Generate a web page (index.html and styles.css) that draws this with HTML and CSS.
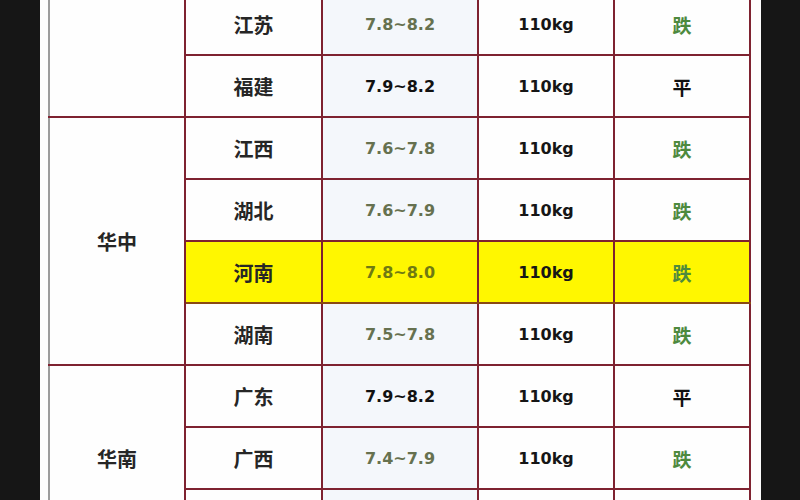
FILE: index.html
```html
<!DOCTYPE html>
<html lang="zh-CN">
<head>
<meta charset="utf-8">
<title>生猪价格</title>
<link rel="stylesheet" href="styles.css">
</head>
<body>
<div class="page">
  <table class="prices">
    <colgroup>
      <col class="c-region"><col class="c-prov"><col class="c-price"><col class="c-weight"><col class="c-trend">
    </colgroup>
    <tbody>
      <tr>
        <td class="region" rowspan="2"></td>
        <td class="prov">江苏</td>
        <td class="price down">7.8~8.2</td>
        <td class="weight">110kg</td>
        <td class="trend down">跌</td>
      </tr>
      <tr>
        <td class="prov">福建</td>
        <td class="price flat">7.9~8.2</td>
        <td class="weight">110kg</td>
        <td class="trend flat">平</td>
      </tr>
      <tr>
        <td class="region" rowspan="4">华中</td>
        <td class="prov">江西</td>
        <td class="price down">7.6~7.8</td>
        <td class="weight">110kg</td>
        <td class="trend down">跌</td>
      </tr>
      <tr>
        <td class="prov">湖北</td>
        <td class="price down">7.6~7.9</td>
        <td class="weight">110kg</td>
        <td class="trend down">跌</td>
      </tr>
      <tr class="hl">
        <td class="prov">河南</td>
        <td class="price down">7.8~8.0</td>
        <td class="weight">110kg</td>
        <td class="trend down">跌</td>
      </tr>
      <tr>
        <td class="prov">湖南</td>
        <td class="price down">7.5~7.8</td>
        <td class="weight">110kg</td>
        <td class="trend down">跌</td>
      </tr>
      <tr>
        <td class="region" rowspan="3">华南</td>
        <td class="prov">广东</td>
        <td class="price flat">7.9~8.2</td>
        <td class="weight">110kg</td>
        <td class="trend flat">平</td>
      </tr>
      <tr>
        <td class="prov">广西</td>
        <td class="price down">7.4~7.9</td>
        <td class="weight">110kg</td>
        <td class="trend down">跌</td>
      </tr>
      <tr>
        <td class="prov"></td>
        <td class="price down"></td>
        <td class="weight"></td>
        <td class="trend down"></td>
      </tr>
    </tbody>
  </table>
</div>
</body>
</html>
```
FILE: styles.css
```css
html, body {
  margin: 0;
  padding: 0;
  background: #161616;
}

.page {
  width: 721px;
  height: 500px;
  margin-left: 40px;
  padding-left: 8px;
  box-sizing: border-box;
  background: #fdfdfd;
  overflow: hidden;
}

.prices {
  border-collapse: collapse;
  table-layout: fixed;
  width: 701px;
  margin-top: -8px;
  font-family: "DejaVu Sans", "Noto Sans CJK SC", sans-serif;
}

.c-region { width: 136px; }
.c-prov { width: 137px; }
.c-price { width: 156px; }
.c-weight { width: 136px; }
.c-trend { width: 136px; }

.prices td {
  height: 60px;
  padding: 0;
  border: 2px solid #7e2230;
  text-align: center;
  vertical-align: middle;
  background: #fefefe;
  color: #1a1a1a;
}

.prices td.region {
  border-left: 2px solid #9c9c9c;
  font-family: "Noto Sans CJK SC", sans-serif;
  font-size: 20px;
  font-weight: 700;
  color: #262626;
}

.prices td.prov {
  font-family: "Noto Sans CJK SC", sans-serif;
  font-size: 20px;
  font-weight: 700;
  color: #262626;
}

.prices td.price {
  background: #f4f7fb;
  font-size: 16px;
  font-weight: 700;
}

.prices td.price.down {
  color: #66714f;
}

.prices td.price.flat {
  color: #111;
}

.prices td.weight {
  font-size: 16px;
  font-weight: 700;
  color: #161616;
}

.prices td.trend {
  font-family: "Noto Sans CJK SC", sans-serif;
  font-size: 19px;
  font-weight: 700;
}

.prices td.trend.down {
  color: #4e8a3e;
}

.prices td.trend.flat {
  color: #111;
}

.prices tr.hl td {
  background: #fff700;
  border-bottom-color: #8a4a12;
}

.prices tr.hl td.price.down {
  color: #6f7a12;
}
```
